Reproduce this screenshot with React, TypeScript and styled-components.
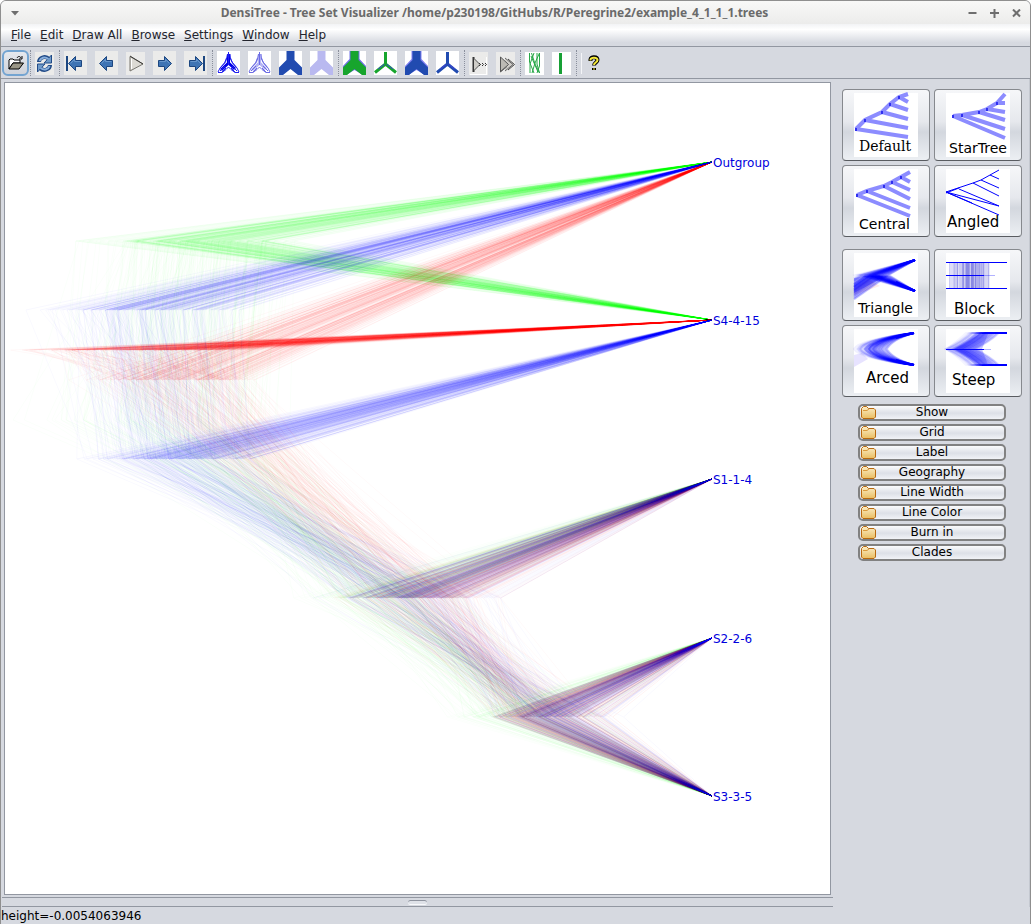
import React, { ReactNode } from "react";
import styled, { createGlobalStyle } from "styled-components";

const GlobalStyle = createGlobalStyle`
  * { box-sizing: border-box; }
  body {
    margin: 0;
    background: #ffffff;
    color: #000000;
    font-family: "DejaVu Sans", sans-serif;
    font-size: 12px;
    line-height: 16px;
  }
  button { font: inherit; color: inherit; }
`;

/* ---------- window frame ---------- */

const Frame = styled.div`
  display: flex;
  flex-direction: column;
  min-height: 100vh;
  background: #d6d9e0;
  border: 1px solid #8f8f8f;
  border-radius: 6px 6px 0 0;
  overflow: hidden;
`;

const TitleBar = styled.header`
  display: flex;
  align-items: center;
  height: 23px;
  padding-right: 3px;
  background: linear-gradient(#f8f8f7, #ececeb);
`;

const Title = styled.h1`
  flex: 1;
  margin: 0;
  padding-top: 1px;
  text-align: center;
  font: bold 12px/20px "Noto Sans", sans-serif;
  color: #6a6a6a;
`;

const FrameButton = styled.button<{ $wide?: boolean }>`
  display: flex;
  align-items: center;
  justify-content: center;
  width: ${(p) => (p.$wide ? 27 : 22)}px;
  height: 22px;
  padding: 2px 0 0;
  border: 0;
  background: none;
`;

const MenuBar = styled.nav`
  display: flex;
  height: 23px;
  padding-left: 6px;
  background: linear-gradient(#f2f3f5, #ffffff 25%, #d6d9e0 85%);
  border-bottom: 1px solid #9297a1;
`;

const MenuButton = styled.button`
  padding: 0 5px 0 4px;
  border: 0;
  background: none;
  line-height: 20px;
  color: #23252e;
`;

const ToolBar = styled.div`
  display: flex;
  height: 32px;
  padding: 3px 1px 2px;
  border-bottom: 1px solid #9297a1;
`;

const Divider = styled.span`
  width: 2px;
  border-right: 1px dotted #8a8f9c;
`;

const ToolButton = styled.button<{ $small?: boolean; $focused?: boolean }>`
  display: flex;
  align-items: center;
  justify-content: center;
  width: ${(p) => (p.$small ? 27 : 31)}px;
  padding: 0;
  border: ${(p) => (p.$focused ? "2px solid #73a4d1" : "0")};
  border-radius: 6px;
  background: ${(p) => (p.$focused ? "linear-gradient(#e6e9ee, #ced2da)" : "none")};
  svg { display: block; }
`;

/* ---------- main area ---------- */

const Main = styled.main`
  display: flex;
  flex: 1;
`;

const ChartColumn = styled.section`
  display: flex;
  flex: 1;
  flex-direction: column;
  min-width: 0;
  padding-top: 3px;
`;

const ChartPanel = styled.div`
  flex: 1;
  margin: 0 2px 2px 3px;
  border: 1px solid #9297a1;
  background: #ffffff;
  svg { display: block; width: 100%; height: auto; }
`;

const Splitter = styled.div`
  display: flex;
  justify-content: center;
  align-items: center;
  height: 10px;
  margin-left: 1px;
  border: solid #9297a1;
  border-width: 1px 0;
`;

const Grip = styled.span`
  width: 19px;
  height: 5px;
  border-radius: 3px;
  border-top: 1px solid #8f949f;
  border-bottom: 1px solid #f8f9fb;
  background: #dfe2e8;
`;

const SideBar = styled.aside`
  display: flex;
  flex-direction: column;
  width: 197px;
  padding: 10px 7px 0 9px;
  border-right: 1px solid #c4c8d0;
`;

const StyleGroups = styled.div`
  display: flex;
  flex-direction: column;
  gap: 12px;
`;

const StyleGrid = styled.div`
  display: grid;
  grid-template-columns: 88px 88px;
  grid-auto-rows: 72px;
  gap: 4px;
`;

const StyleButton = styled.button`
  display: flex;
  align-items: center;
  justify-content: center;
  padding: 0;
  border: 1px solid #86898e;
  border-bottom-color: #595c61;
  border-radius: 4px;
  background: linear-gradient(#f6f7f9, #e6e8ed 45%, #d3d7de 60%, #eceff3);
  svg { overflow: visible; }
`;

const Sections = styled.div`
  display: flex;
  flex-direction: column;
  gap: 3px;
  padding: 7px 16px 0;
`;

const SectionButton = styled.button`
  display: flex;
  align-items: center;
  height: 17px;
  padding: 0 16px 0 1px;
  border: 2px solid #818181;
  border-radius: 5px;
  background: linear-gradient(#fafbfc, #dde0e7 55%, #f1f3f7);
  line-height: 13px;
  span { flex: 1; text-align: center; }
`;

const StatusBar = styled.footer`
  height: 17px;
  line-height: 18px;
`;

/* ---------- random numbers ---------- */

function makeRandom(seed: number) {
  let s = seed;
  const uniform = () => {
    s = (s + 0x6d2b79f5) | 0;
    let t = Math.imul(s ^ (s >>> 15), 1 | s);
    t = (t + Math.imul(t ^ (t >>> 7), 61 | t)) ^ t;
    return ((t ^ (t >>> 14)) >>> 0) / 4294967296;
  };
  const normal = (mean: number, sd: number) =>
    mean + sd * Math.sqrt(-2 * Math.log(1 - uniform())) * Math.cos(2 * Math.PI * uniform());
  const within = (mean: number, sd: number, min: number, max: number) => {
    let v = normal(mean, sd);
    while (v < min || v > max) v = normal(mean, sd);
    return v;
  };
  const expo = (mean: number) => -mean * Math.log(1 - uniform());
  return { uniform, normal, within, expo };
}

/* ---------- tree set ---------- */

const TIP_X = 707;
const TIPS = [
  { name: "Outgroup", y: 79 },
  { name: "S4-4-15", y: 237 },
  { name: "S1-1-4", y: 396 },
  { name: "S2-2-6", y: 555 },
  { name: "S3-3-5", y: 713 },
];
const [OUT, S4, S1, S2, S3] = TIPS.map((t) => t.y);

type Topology = "green" | "red" | "blue";
type Node = [number, number];

const edge = ([ax, ay]: Node, [bx, by]: Node) =>
  `M${ax.toFixed(1)} ${ay}L${bx.toFixed(1)} ${by}`;
const toTip = (node: Node, tipY: number) => edge(node, [TIP_X, tipY]);

function makeTrees(topology: Topology, count: number, seed: number) {
  const r = makeRandom(seed);
  const isGreen = topology === "green";
  return Array.from({ length: count }, () => {
    const a: Node = [isGreen ? r.within(383, 38, 270, 460) : r.within(410, 36, 300, 500), 515];
    const wide = r.uniform() < 0.12;
    const b: Node = [
      Math.max(a[0] + 20, isGreen ? r.within(522, 36, 430, 600) : r.within(538, wide ? 44 : 29, 486, 622)),
      634,
    ];
    const lower = toTip(b, S2) + toTip(b, S3) + toTip(a, S1);
    const root = (x: number, mean: number) => {
      const v = x - 4 - r.expo(mean);
      return v < 40 ? 4 + r.uniform() * 90 : v;
    };
    if (isGreen) {
      const c: Node = [r.within(190, 48, 38, 290), 158];
      const top: Node = [Math.max(8, c[0] - 4 - r.expo(20)), 337];
      return { upper: toTip(c, OUT) + toTip(c, S4), lower, inner: edge(a, b) + edge(top, c) + edge(top, a) };
    }
    if (topology === "red") {
      const c: Node = [r.within(178, 48, 50, 250), 297];
      const top: Node = [root(c[0], 40), 267];
      return { upper: toTip(c, OUT) + toTip(top, S4), lower, inner: edge(a, b) + edge(top, c) + edge(c, a) };
    }
    const c: Node = [r.within(178, 48, 58, 250), 376];
    const top: Node = [root(c[0], 30), 227];
    return { upper: toTip(top, OUT) + toTip(c, S4), lower, inner: edge(a, b) + edge(top, c) + edge(c, a) };
  });
}

const TREE_SETS = [
  { color: "#00ff00", trees: makeTrees("green", 260, 11), upper: 0.023, lower: 0.014, inner: 0.02 },
  { color: "#ff0000", trees: makeTrees("red", 260, 29), upper: 0.026, lower: 0.026, inner: 0.023 },
  { color: "#0000ff", trees: makeTrees("blue", 260, 47), upper: 0.033, lower: 0.027, inner: 0.023 },
];

const DensiTree = () => (
  <svg viewBox="0 0 825 811" role="img" aria-label="Tree set">
    {TREE_SETS.map((set) => (
      <g key={set.color} stroke={set.color} fill="none">
        {set.trees.map((t, i) => (
          <React.Fragment key={i}>
            <path d={t.inner} strokeOpacity={set.inner} />
            <path d={t.upper} strokeOpacity={set.upper} />
            <path d={t.lower} strokeOpacity={set.lower} />
          </React.Fragment>
        ))}
      </g>
    ))}
    <g fill="#0000dd" fontFamily="DejaVu Sans, sans-serif" fontSize={12}>
      {TIPS.map((t) => (
        <text key={t.name} x={TIP_X + 1} y={t.y + 5}>
          {t.name}
        </text>
      ))}
    </g>
  </svg>
);

/* ---------- drawing style previews ---------- */

const Preview = ({
  label, x, y, serif, size = 15, children,
}: { label: string; x: number; y: number; serif?: boolean; size?: number; children: ReactNode }) => (
  <svg width={64} height={64} viewBox="0 0 64 64" fill="none">
    <rect width={64} height={64} fill="#fff" />
    {children}
    <text x={x} y={y} fill="#000" fontSize={size} fontFamily={serif ? "DejaVu Serif, serif" : "DejaVu Sans, sans-serif"}>
      {label}
    </text>
  </svg>
);

type Point = [number, number];

const ThickTree = ({ spine, tips }: { spine: Point[]; tips: Point[] }) => (
  <>
    <path
      stroke="#8c8cff"
      strokeWidth={4}
      d={`M${spine.join("L")}` + tips.map((t, i) => `M${spine[i]}L${t}`).join("")}
    />
    {spine.slice(0, -1).map(([px, py]) => (
      <rect key={px} x={px - 1} y={py - 1} width={2} height={3} fill="#3030f0" />
    ))}
  </>
);

const previewRandom = makeRandom(5);
const JOINTS = Array.from({ length: 110 }, () => previewRandom.within(20, 9, 0, 40));

/* The tails stop at the left edge of the preview, x = 0. */
const trianglePaths = JOINTS.map((j) => `M61 7L${j} 22L61 38M${j} 22L0 ${22 + j * 0.7}`);
const arcPaths = JOINTS.map((j) => `M60 4Q${j + 4} 10 ${j - 2} 20Q${j + 4} 30 60 36`);
const steepPaths = JOINTS.map(
  (j) => `M61 4H${j + 18}Q${j + 10} 12 ${Math.max(0, j - 6)} 20Q${j + 10} 28 ${j + 18} 36H61`,
);

const Bundle = ({ paths, faint }: { paths: string[]; faint?: boolean }) => (
  <g stroke="#0000ff" strokeOpacity={faint ? 0.045 : 0.06} strokeWidth={2}>
    {paths.map((d, i) => (
      <path key={i} d={d} />
    ))}
  </g>
);

const DefaultPreview = () => (
  <Preview label="Default" x={5} y={58} serif size={14}>
    <ThickTree
      spine={[[2, 36], [11, 27], [28, 19], [36, 11], [45, 4], [54, 1]]}
      tips={[[54, 44], [54, 35], [54, 26], [54, 17], [54, 9]]}
    />
  </Preview>
);
const StarTreePreview = () => (
  <Preview label="StarTree" x={3} y={60} size={14}>
    <ThickTree
      spine={[[7, 23], [16, 22], [33, 19], [41, 16], [51, 10], [59, 1]]}
      tips={[[59, 45], [59, 36], [59, 27], [59, 19], [59, 10]]}
    />
  </Preview>
);
const CentralPreview = () => (
  <Preview label="Central" x={5} y={60} size={14}>
    <ThickTree
      spine={[[3, 26], [13, 22], [30, 17], [38, 13], [47, 8], [56, 3]]}
      tips={[[56, 47], [56, 39], [56, 30], [56, 21], [56, 13]]}
    />
  </Preview>
);
const AngledPreview = () => (
  <Preview label="Angled" x={1} y={58}>
    <path
      stroke="#0000ff"
      d="M0 23L27 14 35 11 44 6 53 1M0 24L13 19M44 6L53 10M35 11L53 19M27 14L53 27M0 23L53 46M0 23L53 37M13 20L53 37M0 23L26 34"
    />
  </Preview>
);
const TrianglePreview = () => (
  <Preview label="Triangle" x={4} y={60} size={14}>
    <path d="M0 42L26 33 14 26 0 36z" fill="#ff0000" fillOpacity={0.08} />
    <path d="M0 25L22 21 30 24 0 40z" fill="#0000ff" fillOpacity={0.3} />
    <Bundle paths={trianglePaths} />
    <path d="M61 7L40 14M61 38L42 29" stroke="#0000ff" strokeWidth={2} />
  </Preview>
);
const BlockPreview = () => (
  <Preview label="Block" x={8} y={61}>
    <g stroke="#3030d0" strokeOpacity={0.1}>
      {JOINTS.map((j, i) => (
        <path key={i} d={`M${Math.round(j * 1.2 + 1)}.5 9V35`} />
      ))}
    </g>
    <rect x={3} y={9} width={36} height={26} fill="#3030d0" fillOpacity={0.16} />
    <path d="M0 9.500H61M0 35.500H61M0 22.500H38" stroke="#0000ff" />
    <path d="M38 22.500H49" stroke="#0000ff" strokeOpacity={0.3} />
  </Preview>
);
const ArcedPreview = () => (
  <Preview label="Arced" x={12} y={54}>
    <path d="M0 38L14 30 8 24 0 26z" fill="#6040ff" fillOpacity={0.15} />
    <Bundle paths={arcPaths} />
    <path d="M60 4L42 9M60 36L42 31" stroke="#0000ff" strokeWidth={2} />
  </Preview>
);
const SteepPreview = () => (
  <Preview label="Steep" x={6} y={56}>
    <Bundle paths={steepPaths} faint />
    <path d="M8 20L34 5H42L36 20L42 36H34z" fill="#2020ff" fillOpacity={0.25} />
    <path d="M0 20.500H38M36 4.500H61M36 36.500H61" stroke="#0000ff" />
    <path d="M38 20.500H45" stroke="#0000ff" strokeOpacity={0.3} />
  </Preview>
);

/* ---------- toolbar icons ---------- */

const OpenIcon = () => (
  <svg width={18} height={18} viewBox="0 0 18 18">
    <path d="M2 15V6l1-1h3l1 1h6v3H6z" fill="#fff" stroke="#000" />
    <path d="M2 15l4-6h10.500L12 15z" fill="#9a9686" stroke="#000" />
    <path d="M10 4c1-2 3-2 4 0M15 2v3h-3" fill="none" stroke="#000" />
  </svg>
);

const Tile = ({ children, small }: { children?: ReactNode; small?: boolean }) => (
  <svg width={small ? 19 : 23} height={small ? 23 : 24} viewBox={small ? "0 0 19 23" : "0 0 23 24"} fill="none">
    <rect width={23} height={24} fill="#ebebea" />
    {children}
  </svg>
);

const RefreshIcon = () => (
  <Tile small>
    <path d="M4 10c0-4 6-7 10-3" stroke="#204a87" strokeWidth={4} />
    <path d="M16.500 3v8H9z" fill="#6f9ac9" stroke="#204a87" />
    <path d="M15 13c0 4-6 7-10 3" stroke="#204a87" strokeWidth={4} />
    <path d="M2.500 20v-8H10z" fill="#6f9ac9" stroke="#204a87" />
    <path d="M4.500 9c1-3 5-5 9-2M14.500 14c-1 3-5 5-9 2" stroke="#88aedb" strokeWidth={2} />
  </Tile>
);

const ARROW = "M1.500 7.500L8.500 0.500V4.500H14.500V10.500H8.500V14.500z";
const ArrowIcon = ({ right, stop }: { right?: boolean; stop?: boolean }) => (
  <Tile>
    <g transform={right ? "translate(23 0) scale(-1 1)" : undefined}>
      <g transform="translate(3 5)">
        <path d={ARROW} fill="#3f74b4" stroke="#1c4680" />
        <path d="M3.500 7.500L7.500 3.500V5.500H13.500" stroke="#6796cc" />
      </g>
      {stop && <path d="M3 5V20" stroke="#1c4680" strokeWidth={2} />}
    </g>
  </Tile>
);

const PlayIcon = () => (
  <Tile small>
    <path d="M4 4.500V19L17 12z" fill="#dcdad4" stroke="#77756f" />
    <path d="M4 4L17 12" stroke="#3c3b38" />
    <path d="M5.500 17V6.500" stroke="#fff" />
  </Tile>
);

const PlayDotsIcon = () => (
  <Tile small>
    <path d="M17.500 5V22M1 22.500H18" stroke="#fff" />
    <path d="M4.500 5V20" stroke="#333" strokeWidth={2} />
    <path d="M5 6.500L11 12.500L5 18.500" fill="#cfcdc8" stroke="#555" />
    <path d="M10 11l1.500 1.500-1.500 1.500M13 11l1.500 1.500-1.500 1.500M16 11l1.500 1.500-1.500 1.500" stroke="#333" />
  </Tile>
);

const PlayFastIcon = () => (
  <Tile small>
    <path d="M4.500 5V20L11 14.500M9 6L17 12.500L9 19" fill="#cfcdc8" stroke="#666" />
    <path d="M4.500 5L12.500 12.500L4.500 19.500z" fill="#bcbab4" stroke="#555" />
    <path d="M12 7L18.500 12.500L12 18" stroke="#444" />
  </Tile>
);

const WebIcon = ({ color, hub }: { color: string; hub: string }) => (
  <svg width={23} height={24} viewBox="0 0 23 24" fill="none">
    <rect width={23} height={24} fill="#fff" />
    <path stroke={hub} strokeWidth={3} d="M11.500 3V14M11.500 12L4 19M11.500 12L18 18" />
    <path
      stroke={color}
      d="M11.500 1V14M10.500 3L9.500 8L8.500 11L3 17L1 21M13 3L13.500 8L15 11L20 17L22 21M1 21.500H5L9 18.500L11.500 16L14 18.500L18 21.500H22M9.500 7L7.500 12L4 16M13.500 7L15.500 12L19 16M3 20L8 15M5 21L9 17M20 20L15 15M18 21L14 17"
    />
  </svg>
);

const ForkIcon = ({ color, stem = color, edge: rim, thin }: { color: string; stem?: string; edge?: string; thin?: boolean }) => (
  <svg width={23} height={24} viewBox="0 0 23 24" fill="none">
    <rect width={23} height={24} fill="#fff" />
    {thin ? (
      <>
        <path d="M11.500 13L1 21.500M11.500 13L22 21.500" stroke={color} strokeWidth={3} />
        <path d="M4 18L11.500 12.500L19 18" stroke="#4040d8" />
        <path d="M11.500 1V13.500" stroke={stem} strokeWidth={3} />
      </>
    ) : (
      <>
        {rim && <path d="M6.500 0V8L0 15V24H3L11.500 19L20 24H23V15L16.500 8V0z" fill={rim} />}
        <path d="M7.500 0V9L0 16.500V24H4L11.500 18L19 24H23V16.500L15.500 9V0z" fill={color} />
      </>
    )}
  </svg>
);

const GreenLinesIcon = ({ single }: { single?: boolean }) => (
  <svg width={19} height={23} viewBox="0 0 19 23" fill="none">
    <rect width={19} height={23} fill="#fff" />
    {single ? (
      <path d="M8.500 1V22" stroke="#17a035" strokeWidth={3} />
    ) : (
      <path
        stroke="#28a848"
        d="M4.500 1V10L9 21M6.500 1L10 12 14.500 21M9 1L5 12V21M14.500 1L10 11 7 21M12 1V12L14.500 21M14.500 1V14L12 21M6 4L13 20"
      />
    )}
  </svg>
);

const HelpIcon = () => (
  <svg width={19} height={23} viewBox="0 0 19 23" fill="none">
    <g transform="translate(5 0)">
      <path d="M4.500 9V7.500C4.500 4.500 11.500 4.500 11.500 8C11.500 10.500 8 10.500 8 13.500M8 16V18" stroke="#000" strokeWidth={4} />
      <path d="M4.500 8.500V7.500C5 5 11.500 5 11.500 8C11.500 10.500 8 10.500 8 13M8 16.500V17.500" stroke="#f4e83a" strokeWidth={2} />
    </g>
    <path d="M0.500 1V22" stroke="#f4f5f8" />
  </svg>
);

const FolderIcon = () => (
  <svg width={15} height={13} viewBox="0 0 15 13">
    <defs>
      <linearGradient id="folder" x1="0" y1="0" x2="0" y2="1">
        <stop offset="0" stopColor="#fbeec8" />
        <stop offset="1" stopColor="#e9bd62" />
      </linearGradient>
    </defs>
    <path d="M0.500 11V2.500L2.500 0.500H5.500L7.500 2.500H13L14.500 4V11L13 12.500H2z" fill="url(#folder)" stroke="#b9690f" />
    <path d="M2 4.500H6L8 3" fill="none" stroke="#d9993c" />
  </svg>
);

/* ---------- page ---------- */

const MENUS = ["File", "Edit", "Draw All", "Browse", "Settings", "Window", "Help"];
const SECTIONS = ["Show", "Grid", "Label", "Geography", "Line Width", "Line Color", "Burn in", "Clades"];

type Tool = { name: string; icon: ReactNode; small?: boolean; focused?: boolean };

const NAVY = "#214bb0";
const GREEN = "#17a52d";

const TOOL_GROUPS: Tool[][] = [
  [{ name: "Open", icon: <OpenIcon />, small: true, focused: true }],
  [{ name: "Reload", icon: <RefreshIcon />, small: true }],
  [
    { name: "First tree", icon: <ArrowIcon stop /> },
    { name: "Previous tree", icon: <ArrowIcon /> },
    { name: "Play", icon: <PlayIcon />, small: true },
    { name: "Next tree", icon: <ArrowIcon right /> },
    { name: "Last tree", icon: <ArrowIcon right stop /> },
  ],
  [
    { name: "Draw all trees", icon: <WebIcon color="#2020f0" hub="#0000e8" /> },
    { name: "Draw all trees lightly", icon: <WebIcon color="#6c6ce4" hub="#b4b4f4" /> },
    { name: "Draw root canal", icon: <ForkIcon color={NAVY} /> },
    { name: "Draw root canal lightly", icon: <ForkIcon color="#b9b9f0" /> },
  ],
  [
    { name: "Wide green consensus", icon: <ForkIcon color={GREEN} edge="#7070e8" /> },
    { name: "Thin green consensus", icon: <ForkIcon color={GREEN} thin /> },
    { name: "Wide blue consensus", icon: <ForkIcon color={NAVY} edge="#8080f0" /> },
    { name: "Thin blue consensus", icon: <ForkIcon color={NAVY} thin /> },
  ],
  [
    { name: "Animate slowly", icon: <PlayDotsIcon />, small: true },
    { name: "Animate fast", icon: <PlayFastIcon />, small: true },
  ],
  [
    { name: "Jitter", icon: <GreenLinesIcon />, small: true },
    { name: "No jitter", icon: <GreenLinesIcon single />, small: true },
  ],
  [{ name: "Help", icon: <HelpIcon />, small: true }],
];

const STYLE_GROUPS = [
  [
    { name: "Default", icon: <DefaultPreview /> },
    { name: "StarTree", icon: <StarTreePreview /> },
    { name: "Central", icon: <CentralPreview /> },
    { name: "Angled", icon: <AngledPreview /> },
  ],
  [
    { name: "Triangle", icon: <TrianglePreview /> },
    { name: "Block", icon: <BlockPreview /> },
    { name: "Arced", icon: <ArcedPreview /> },
    { name: "Steep", icon: <SteepPreview /> },
  ],
];

const FrameGlyph = ({ d }: { d: string }) => (
  <svg width={9} height={9} viewBox="0 0 9 9" fill="none" stroke="#6e6e6e" strokeWidth={2}>
    <path d={d} />
  </svg>
);

export default function App() {
  return (
    <>
      <GlobalStyle />
      <Frame>
        <TitleBar>
          <FrameButton $wide aria-label="Window menu">
            <svg width={8} height={5} viewBox="0 0 8 5">
              <path d="M0 0H8L4 4.500z" fill="#6e6e6e" />
            </svg>
          </FrameButton>
          <Title>DensiTree - Tree Set Visualizer /home/p230198/GitHubs/R/Peregrine2/example_4_1_1_1.trees</Title>
          <FrameButton aria-label="Minimize"><FrameGlyph d="M0.500 4H8.500" /></FrameButton>
          <FrameButton aria-label="Maximize"><FrameGlyph d="M0 4H9M4.500 0V9" /></FrameButton>
          <FrameButton aria-label="Close"><FrameGlyph d="M1 0.500L8 7.500M8 0.500L1 7.500" /></FrameButton>
        </TitleBar>
        <MenuBar>
          {MENUS.map((m) => (
            <MenuButton key={m}>
              <u>{m[0]}</u>
              {m.slice(1)}
            </MenuButton>
          ))}
        </MenuBar>
        <ToolBar>
          {TOOL_GROUPS.map((group, g) => (
            <React.Fragment key={g}>
              {g > 0 && <Divider />}
              {group.map((t) => (
                <ToolButton key={t.name} $small={t.small} $focused={t.focused} aria-label={t.name}>
                  {t.icon}
                </ToolButton>
              ))}
            </React.Fragment>
          ))}
        </ToolBar>
        <Main>
          <ChartColumn>
            <ChartPanel>
              <DensiTree />
            </ChartPanel>
            <Splitter>
              <Grip />
            </Splitter>
          </ChartColumn>
          <SideBar>
            <StyleGroups>
              {STYLE_GROUPS.map((group, g) => (
                <StyleGrid key={g}>
                  {group.map((s) => (
                    <StyleButton key={s.name}>{s.icon}</StyleButton>
                  ))}
                </StyleGrid>
              ))}
            </StyleGroups>
            <Sections>
              {SECTIONS.map((s) => (
                <SectionButton key={s}>
                  <FolderIcon />
                  <span>{s}</span>
                </SectionButton>
              ))}
            </Sections>
          </SideBar>
        </Main>
        <StatusBar>height=-0.0054063946</StatusBar>
      </Frame>
    </>
  );
}
